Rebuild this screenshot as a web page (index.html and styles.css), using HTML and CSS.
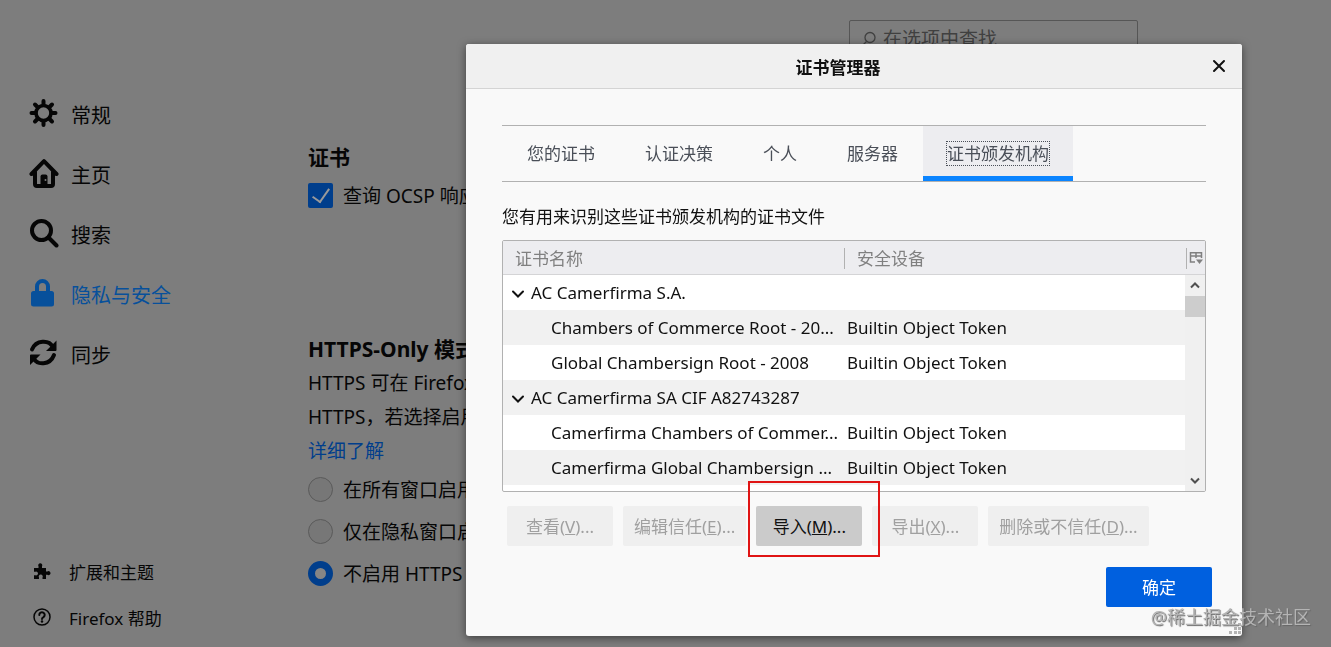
FILE: index.html
```html
<!DOCTYPE html>
<html lang="zh-CN">
<head>
    <meta charset="UTF-8">
    <meta name="viewport" content="width=device-width, initial-scale=1.0">
    <title>选项</title>
    <link rel="stylesheet" href="styles.css">
</head>
<body>

<div class="page">
    <nav class="sidebar">
        <ul class="categories">
            <li><a href="#general">
                <svg class="icon" viewBox="0 0 30 30"><g fill="none" stroke="currentColor" stroke-linecap="round"><circle cx="14.500" cy="14" r="7.500" stroke-width="3.600"/><path stroke-width="4" d="M14.500 2v4M14.500 22v4M2.500 14h4M22.500 14h4M6 5.500l2.500 2.500M20.500 20l2.500 2.500M6 22.500l2.500-2.500M20.500 8l2.500-2.500"/></g></svg>
                常规</a></li>
            <li><a href="#home">
                <svg class="icon" viewBox="0 0 30 30"><g fill="none" stroke="currentColor" stroke-width="4" stroke-linecap="round" stroke-linejoin="round"><path d="M2.500 15L15 2.200 27.500 15"/><path d="M6 13v12q0 2 2 2h14q2 0 2-2V13"/></g><path fill="currentColor" d="M11.500 27V17.500q0-2 2-2h3q2 0 2 2V27z"/><circle cx="16.500" cy="21" r="1" fill="#7d7d7d"/></svg>
                主页</a></li>
            <li><a href="#search">
                <svg class="icon" viewBox="0 0 30 30"><g fill="none" stroke="currentColor" stroke-width="4" stroke-linecap="round"><circle cx="12.500" cy="11.500" r="9.500"/><path d="M19.500 18.500l8 8"/></g></svg>
                搜索</a></li>
            <li><a href="#privacy" class="active">
                <svg class="icon" viewBox="0 0 30 30"><rect x="2" y="12" width="23" height="15.500" rx="2.500" fill="currentColor"/><path fill="none" stroke="currentColor" stroke-width="4" d="M8 13V7.500a5.500 5.500 0 0 1 11 0V13"/></svg>
                隐私与安全</a></li>
            <li><a href="#sync">
                <svg class="icon" viewBox="0 0 30 30"><g fill="none" stroke="currentColor" stroke-width="4" stroke-linecap="round"><path d="M3 10.500C7 .500 20 .500 24 8"/><path d="M25 16C21 26.500 8 26.500 4.500 19"/></g><path fill="currentColor" d="M27.500 1.500V11q0 1-1 1h-9.500zM1 26V16.500q0-1 1-1h9.500z"/></svg>
                同步</a></li>
        </ul>
        <ul class="footer-links">
            <li><a href="#addons">
                <svg class="icon-small" viewBox="0 0 18 18"><path fill="currentColor" d="M1 6h4.500V4.200A2 2 0 1 1 9 4.200V6h4v3.500h1.300a2 2 0 1 1 0 3.300H13V17H9.500v-1.600a2 2 0 1 0-3.500 0V17H1v-3.700h1.500a1.900 1.900 0 1 0 0-3.600H1z"/></svg>
                扩展和主题</a></li>
            <li><a href="#help">
                <svg class="icon-small" viewBox="0 0 18 18"><g fill="none" stroke="currentColor"><circle cx="9" cy="9" r="8" stroke-width="1.500"/><path stroke-width="2" stroke-linecap="round" d="M6.300 7a2.700 2.700 0 1 1 4.200 2.200Q9 10 9 11"/></g><circle cx="9" cy="13.500" r="1.200" fill="currentColor"/></svg>
                Firefox 帮助</a></li>
        </ul>
    </nav>

    <main class="content">
        <div class="search-box">
            <svg viewBox="0 0 16 16"><g fill="none" stroke="currentColor" stroke-width="1.300"><circle cx="9" cy="6.500" r="5"/><path d="M5.500 10.500L1.500 14.500"/></g></svg>
            <input type="text" aria-label="查找" placeholder="在选项中查找">
        </div>

        <section class="certificates">
            <h2>证书</h2>
            <label class="option"><input type="checkbox" checked>查询 OCSP 响应</label>
        </section>

        <section class="https-only">
            <h2>HTTPS-Only 模式</h2>
            <p>HTTPS 可在 Firefox<br>HTTPS，若选择启用</p>
            <a class="learn-more" href="#learn">详细了解</a>
            <label class="option"><input type="radio" name="https">在所有窗口启用</label>
            <label class="option"><input type="radio" name="https">仅在隐私窗口启</label>
            <label class="option"><input type="radio" name="https" checked>不启用 HTTPS</label>
        </section>
    </main>
</div>

<div class="overlay">
    <div class="dialog" role="dialog" aria-labelledby="dialogTitle">
        <header class="dialog-header">
            <h1 id="dialogTitle">证书管理器</h1>
            <button class="close" type="button" aria-label="关闭">
                <svg viewBox="0 0 14 14"><path fill="none" stroke="currentColor" stroke-width="2" stroke-linecap="round" d="M2 2l10 10M12 2L2 12"/></svg>
            </button>
        </header>

        <div class="dialog-body">
            <div class="tabs" role="tablist">
                <button type="button" role="tab">您的证书</button>
                <button type="button" role="tab">认证决策</button>
                <button type="button" role="tab">个人</button>
                <button type="button" role="tab">服务器</button>
                <button type="button" role="tab" class="selected" aria-selected="true"><span>证书颁发机构</span></button>
            </div>

            <p class="description">您有用来识别这些证书颁发机构的证书文件</p>

            <div class="tree">
                <table>
                    <thead>
                        <tr>
                            <th class="name-col">证书名称</th>
                            <th>安全设备</th>
                            <th class="picker-col">
                                <button type="button" aria-label="选择列">
                                    <svg viewBox="0 0 14 14"><path fill="none" stroke="currentColor" stroke-width="1.500" d="M6 11H1.500V1.700h11V7M1 5h12M7 2v5"/><path fill="currentColor" d="M7 8.500h7L10.500 13z"/></svg>
                                </button>
                            </th>
                        </tr>
                    </thead>
                    <tbody>
                        <tr class="group"><td colspan="2"><svg viewBox="0 0 14 14"><path d="M2 4.500l5 5 5-5"/></svg>AC Camerfirma S.A.</td><td></td></tr>
                        <tr><td>Chambers of Commerce Root - 20...</td><td>Builtin Object Token</td><td></td></tr>
                        <tr><td>Global Chambersign Root - 2008</td><td>Builtin Object Token</td><td></td></tr>
                        <tr class="group"><td colspan="2"><svg viewBox="0 0 14 14"><path d="M2 4.500l5 5 5-5"/></svg>AC Camerfirma SA CIF A82743287</td><td></td></tr>
                        <tr><td>Camerfirma Chambers of Commer...</td><td>Builtin Object Token</td><td></td></tr>
                        <tr><td>Camerfirma Global Chambersign ...</td><td>Builtin Object Token</td><td></td></tr>
                    </tbody>
                </table>
                <div class="scrollbar">
                    <svg viewBox="0 0 20 20"><path d="M6 12l4-4 4 4"/></svg>
                    <div class="thumb"></div>
                    <svg viewBox="0 0 20 20"><path d="M6 8l4 4 4-4"/></svg>
                </div>
            </div>

            <div class="actions">
                <button type="button" disabled>查看(<u>V</u>)...</button>
                <button type="button" disabled>编辑信任(<u>E</u>)...</button>
                <div class="import">
                    <button type="button">导入(<u>M</u>)...</button>
                    <div class="marker"></div>
                </div>
                <button type="button" disabled>导出(<u>X</u>)...</button>
                <button type="button" disabled>删除或不信任(<u>D</u>)...</button>
            </div>
        </div>

        <footer class="dialog-footer">
            <button class="primary" type="button">确定</button>
        </footer>
        <svg class="resizer" viewBox="0 0 12 12"><path fill="#b4b4b4" d="M9 0h3v3H9zM5 4h3v3H5zM9 4h3v3H9zM0 8h3v3H0zM5 8h3v3H5zM9 8h3v3H9z"/></svg>
    </div>
</div>

<div class="watermark">@稀土掘金技术社区</div>

</body>
</html>
```

FILE: styles.css
```css
* {
    box-sizing: border-box;
}

body {
    margin: 0;
    background: #7d7d7d;
    color: #060606;
    font-family: "Noto Sans", "Noto Sans CJK SC", sans-serif;
    font-size: 17px;
    overflow: hidden;
}

button, input {
    font: inherit;
    color: inherit;
}

h1, h2, p, ul {
    margin: 0;
    padding: 0;
}

ul {
    list-style: none;
}

svg {
    flex: none;
}

.page {
    display: flex;
    height: 100vh;
}

/* Sidebar */
.sidebar {
    display: flex;
    flex-direction: column;
    justify-content: space-between;
    width: 308px;
    padding: 84px 0 7px 29px;
}

.sidebar a {
    display: flex;
    align-items: center;
    color: inherit;
    text-decoration: none;
}

.categories a {
    height: 60px;
    gap: 12px;
    font-size: 20px;
}

.categories .active {
    color: #07509b;
}

.icon {
    width: 30px;
    height: 30px;
}

.footer-links a {
    height: 46px;
    gap: 18px;
    padding-left: 4px;
}

.icon-small {
    width: 18px;
    height: 18px;
}

/* Settings page */
.content {
    flex: 1;
    padding-top: 20px;
    font-size: 19px;
    white-space: nowrap;
}

.search-box {
    display: flex;
    align-items: center;
    gap: 4px;
    width: 289px;
    height: 38px;
    margin-left: 541px;
    padding-left: 11px;
    border: 1px solid #565656;
    border-radius: 2px;
    color: #404040;
}

.search-box svg {
    width: 16px;
    height: 16px;
}

.search-box input {
    width: 100%;
    border: none;
    background: none;
}

.search-box input::placeholder {
    color: #404040;
}

h2 {
    font-size: 21px;
    line-height: 34px;
}

.certificates {
    padding-top: 82px;
}

.https-only {
    padding-top: 116px;
}

.https-only p, .learn-more {
    line-height: 34px;
}

.learn-more {
    display: block;
    color: #003e8c;
    text-decoration: none;
}

.option {
    display: flex;
    align-items: center;
    gap: 10px;
    height: 42px;
}

.option input {
    appearance: none;
    width: 25px;
    height: 25px;
    margin: 0;
    border: 1px solid #5a5a5a;
    background: #777;
}

.option input[type="radio"] {
    border-radius: 50%;
}

.option input[type="radio"]:checked {
    border: 7px solid #003e8c;
    background: #858585;
}

.option input[type="checkbox"] {
    display: grid;
    place-items: center;
    border: none;
    border-radius: 2px;
    background: #003e8c;
}

.option input[type="checkbox"]::before {
    content: "";
    width: 8px;
    height: 15px;
    margin-bottom: 4px;
    border: solid #9a9a9a;
    border-width: 0 2px 2px 0;
    transform: rotate(35deg);
}

/* Dialog */
.overlay {
    position: fixed;
    inset: 0;
    display: flex;
    justify-content: center;
    align-items: flex-start;
    padding: 44px 0 0 377px;
}

.dialog {
    position: relative;
    width: 100%;
    max-width: 776px;
    border-radius: 3px;
    background: #f9f9f9;
    color: #111;
    box-shadow: 0 2px 8px rgba(0, 0, 0, 0.5);
}

.dialog-header {
    display: flex;
    align-items: center;
    height: 45px;
    padding-right: 14px;
    border-bottom: 1px solid #d4d4d4;
    border-radius: 3px 3px 0 0;
    background: #f0f0f0;
}

.dialog-header h1 {
    flex: 1;
    font-size: 17px;
    text-align: center;
}

.close {
    display: flex;
    padding: 2px;
    border: none;
    background: none;
}

.close svg {
    width: 14px;
    height: 14px;
}

.dialog-body {
    padding: 36px 36px 0;
}

.tabs {
    display: flex;
    height: 57px;
    border-top: 1px solid #b1b1b1;
    border-bottom: 1px solid #b1b1b1;
}

.tabs button {
    padding: 0 25px 2px;
    border: none;
    background: none;
    color: #4a4f58;
}

.tabs .selected {
    padding: 3px 24px 0;
    border-bottom: 5px solid #0a84ff;
    background: #ededf0;
}

.selected span {
    outline: 1px dotted #4a4f58;
}

.description {
    padding: 20px 0 8px;
    line-height: 30px;
}

.tree {
    display: grid;
    grid-template-columns: 1fr 20px;
    grid-template-rows: 34px 1fr;
    height: 252px;
    border: 1px solid #b1b1b1;
    border-radius: 2px;
    background: #fff;
    overflow: hidden;
}

.tree table {
    grid-area: 1 / 1 / 3 / 3;
    align-self: start;
    width: 100%;
    table-layout: fixed;
    border-collapse: collapse;
}

.tree th {
    height: 34px;
    padding: 0 12px 2px;
    background: linear-gradient(#b1b1b1, #b1b1b1) right center / 1px 21px no-repeat #ededf0;
    box-shadow: inset 0 -1px #d4d4d6;
    color: #808080;
    font-weight: normal;
    text-align: left;
}

.tree .name-col {
    width: 342px;
}

.tree .picker-col {
    width: 18px;
    padding: 0;
    background: #ededf0;
}

.picker-col button {
    display: flex;
    padding: 0 0 0 2px;
    border: none;
    background: none;
}

.picker-col svg {
    width: 14px;
    height: 14px;
}

.tree td {
    height: 35px;
    padding: 0 2px;
    line-height: 24px;
    white-space: nowrap;
}

.tree td:first-child {
    padding-left: 48px;
}

.tree .group td:first-child {
    padding-left: 8px;
}

.tree tbody tr:nth-child(even) {
    background: #f1f1f1;
}

.group svg {
    width: 14px;
    height: 14px;
    margin-right: 6px;
    vertical-align: -2px;
    fill: none;
    stroke: #111;
    stroke-width: 2;
    stroke-linecap: round;
}

.scrollbar {
    grid-area: 2 / 2;
    display: flex;
    flex-direction: column;
    background: #f0f0f0;
}

.scrollbar svg {
    height: 21px;
    fill: none;
    stroke: #505050;
    stroke-width: 2;
}

.scrollbar .thumb {
    height: 21px;
    margin-bottom: auto;
    background: #cdcdcd;
}

.actions {
    display: flex;
    gap: 10px;
    padding: 14px 5px 0;
}

.actions button, .primary {
    min-width: 106px;
    height: 40px;
    padding: 0 11px 2px;
    border: none;
    border-radius: 2px;
    background: #cbcbcb;
    white-space: nowrap;
}

.actions button:disabled {
    background: #efefef;
    color: #a0a0a0;
}

.import {
    position: relative;
}

/* Red frame around the import button */
.marker {
    position: absolute;
    inset: -25px -18px -11px -8px;
    border: 2px solid #e01414;
    pointer-events: none;
}

.dialog-footer {
    display: flex;
    justify-content: flex-end;
    padding: 21px 30px 29px;
}

.dialog-footer .primary {
    background: #0060df;
    color: #fff;
}

.resizer {
    position: absolute;
    right: 1px;
    bottom: 1px;
    width: 12px;
    height: 12px;
}

.watermark {
    position: fixed;
    right: 20px;
    bottom: 18px;
    color: #b4b4b4;
    font-size: 18px;
    text-shadow: 1px 1px 1px #666;
}
```
